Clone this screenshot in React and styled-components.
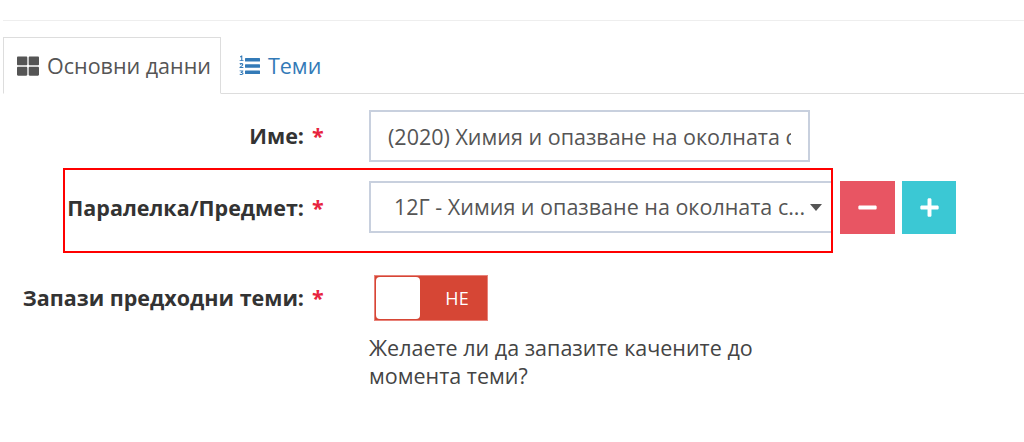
import React from 'react'
import styled, { createGlobalStyle } from 'styled-components'
import { FaThLarge, FaMinus, FaPlus } from 'react-icons/fa'

const GlobalStyle = createGlobalStyle`
  html, body { margin: 0; padding: 0; background: #fff; }
  body { font-family: "Open Sans", "Liberation Sans", sans-serif; color: #333; overflow: hidden; }
  * { box-sizing: border-box; }
`

const Page = styled.div`
  position: relative;
  width: 1024px;
  height: 442px;
  padding: 20px 0 0 3px;
`

const Rule = styled.div`
  border-top: 1px solid #eee;
`

const Tabs = styled.ul`
  display: flex;
  list-style: none;
  margin: 16px 0 0;
  padding: 0;
  height: 57px;
  border-bottom: 1px solid #ddd;
`

const Tab = styled.li`
  display: flex;
  align-items: center;
  gap: 8px;
  height: 57px;
  padding: 0 9px 0 ${p => (p.$active ? 13 : 16)}px;
  font-size: 21.5px;
  color: ${p => (p.$active ? '#555' : '#337ab7')};
  background: ${p => (p.$active ? '#fff' : 'transparent')};
  border: 1px solid ${p => (p.$active ? '#ddd' : 'transparent')};
  border-bottom-color: ${p => (p.$active ? '#fff' : 'transparent')};
  svg { width: 22px; height: 22px; flex: none; }
`

const Form = styled.div`
  padding-top: 16px;
`

const Row = styled.div`
  display: grid;
  grid-template-columns: 301px 65px auto;
  align-items: ${p => (p.$top ? 'start' : 'center')};
  margin-bottom: ${p => p.$gap || 0}px;
`

const Label = styled.label`
  font-size: 21.5px;
  font-weight: 700;
  color: #333;
  text-align: right;
  white-space: nowrap;
  line-height: 28px;
  padding-top: ${p => p.$offset || 0}px;
`

const Star = styled.span`
  font-size: 21.5px;
  font-weight: 700;
  line-height: 28px;
  color: #e7243d;
  padding-left: 8px;
  padding-top: ${p => p.$offset || 0}px;
`

const TextInput = styled.input`
  display: block;
  width: 441px;
  height: 52px;
  padding: 0 17px 0 17px;
  border: 2px solid #c8d0de;
  font: 21.5px "Open Sans", sans-serif;
  color: #555;
  outline: none;
`

const SelectGroup = styled.div`
  display: flex;
  align-items: flex-start;
  gap: 7px;
`

const Select = styled.div`
  position: relative;
  width: 464px;
  height: 52px;
  padding: 0 27px 0 23px;
  border: 2px solid #c8d0de;
  border-right: 0;
  font-size: 21.5px;
  line-height: 48px;
  color: #555;
  white-space: nowrap;
  &::after {
    content: '';
    position: absolute;
    right: 11px;
    top: 21px;
    border: 6px solid transparent;
    border-top: 7px solid #555;
    border-bottom: 0;
  }
`

const IconButton = styled.button`
  display: flex;
  align-items: center;
  justify-content: center;
  width: ${p => p.$width}px;
  height: 53px;
  margin: 0;
  padding: 0;
  border: 1px solid ${p => p.$color};
  background: ${p => p.$color};
  color: #fff;
  svg { width: 21px; height: 21px; }
`

const Toggle = styled.div`
  display: flex;
  width: 114px;
  height: 46px;
  margin-left: 5px;
  padding: 1px;
  background: #d64635;
  border: 1px solid #e8837a;
  color: #fff;
  font-size: 18px;
`

const Knob = styled.span`
  width: 44px;
  height: 42px;
  background: #fff;
  border-radius: 4px;
`

const ToggleText = styled.span`
  flex: 1;
  display: flex;
  align-items: center;
  justify-content: center;
  padding-left: 8px;
`

const Help = styled.p`
  width: 440px;
  margin: 13px 0 0;
  font-size: 21.5px;
  line-height: 28px;
  color: #444;
`

// red annotation drawn over the screenshot
const Highlight = styled.div`
  position: absolute;
  left: 63px;
  top: 168px;
  width: 770px;
  height: 85px;
  border: 2px solid #f00;
  pointer-events: none;
`

// font-awesome 4 style list-ol: heavy bars, tiny numerals
const ListOlIcon = () => (
  <svg viewBox="0 0 22 22" fill="currentColor">
    <rect x="7" y="3" width="15" height="3.4" rx=".5" />
    <rect x="7" y="9.3" width="15" height="3.4" rx=".5" />
    <rect x="7" y="15.6" width="15" height="3.4" rx=".5" />
    <path d="M2 1.5 3.4 .6h.9v4.6H5.5v.9H1.600v-.9h1.600V2L2 2.600z" />
    <path d="M1.500 8.600c.4-.9 3.800-1 3.800 1 0 1.200-1.500 1.700-2.300 2.500h2.400v1H1.500v-.9c.8-1.100 2.600-1.700 2.600-2.500 0-.6-1.200-.5-1.800.3z" />
    <path d="M1.600 15.400h3.700v.8l-1.200 1.100c.9.100 1.400.6 1.400 1.300 0 1.600-2.700 1.800-4 .9l.4-.8c.8.500 2.400.500 2.400-.2 0-.5-.7-.6-1.600-.5v-.8l1.100-1h-2.200z" />
  </svg>
)

export default function App() {
  return (
    <Page>
      <GlobalStyle />
      <Rule />
      <Tabs>
        <Tab $active><FaThLarge /> Основни данни</Tab>
        <Tab><ListOlIcon /> Теми</Tab>
      </Tabs>
      <Form>
        <Row $gap={19}>
          <Label>Име:</Label>
          <Star>*</Star>
          <TextInput readOnly value="(2020) Химия и опазване на околната среда" />
        </Row>
        <Row $gap={41}>
          <Label>Паралелка/Предмет:</Label>
          <Star>*</Star>
          <SelectGroup>
            <Select>12Г - Химия и опазване на околната с...</Select>
            <IconButton $width={55} $color="#e85563"><FaMinus /></IconButton>
            <IconButton $width={54} $color="#3bc8d4"><FaPlus /></IconButton>
          </SelectGroup>
        </Row>
        <Row $top>
          <Label $offset={9}>Запази предходни теми:</Label>
          <Star $offset={9}>*</Star>
          <div>
            <Toggle>
              <Knob />
              <ToggleText>НЕ</ToggleText>
            </Toggle>
            <Help>Желаете ли да запазите качените до момента теми?</Help>
          </div>
        </Row>
      </Form>
      <Highlight />
    </Page>
  )
}
